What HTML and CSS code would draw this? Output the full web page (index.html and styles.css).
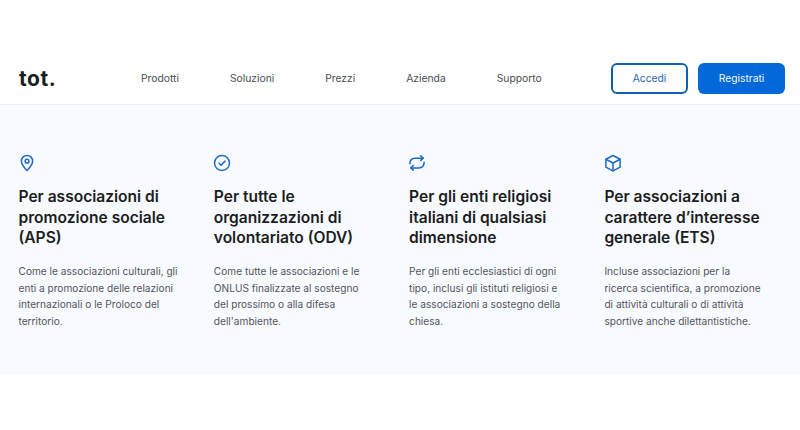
FILE: index.html
```html
<!DOCTYPE html>
<html lang="it">
<head>
<meta charset="utf-8">
<title>tot.</title>
<link rel="stylesheet" href="styles.css">
</head>
<body>
<header class="header">
  <div class="logo">tot.</div>
  <nav class="nav">
    <a>Prodotti</a>
    <a>Soluzioni</a>
    <a>Prezzi</a>
    <a>Azienda</a>
    <a>Supporto</a>
  </nav>
  <div class="actions">
    <a class="btn btn-outline">Accedi</a>
    <a class="btn btn-solid">Registrati</a>
  </div>
</header>
<section class="features">
  <article class="card">
    <svg class="icon" viewBox="0 0 24 24"><path d="M12 22c-1-1.200-7.500-7.600-7.500-12.500a7.500 7.500 0 0 1 15 0c0 4.900-6.500 11.300-7.500 12.500z"/><circle cx="12" cy="9.500" r="2.500"/></svg>
    <h2>Per associazioni di promozione sociale (APS)</h2>
    <p>Come le associazioni culturali, gli enti a promozione delle relazioni internazionali o le Proloco del territorio.</p>
  </article>
  <article class="card">
    <svg class="icon" viewBox="0 0 24 24"><circle cx="12" cy="12" r="10"/><path d="M8 12.300l2.800 2.700L16 9.500"/></svg>
    <h2>Per tutte le organizzazioni di volontariato (ODV)</h2>
    <p>Come tutte le associazioni e le ONLUS finalizzate al sostegno del prossimo o alla difesa dell'ambiente.</p>
  </article>
  <article class="card">
    <svg class="icon" viewBox="0 0 24 24"><path d="M2.500 13c0-4.500 2.500-7.500 7-7.500H20"/><path d="M17 2.500l3.200 3-3.200 3"/><path d="M21.500 11c0 4.500-2.500 7.500-7 7.500H4"/><path d="M7 15.500l-3.200 3 3.200 3"/></svg>
    <h2>Per gli enti religiosi italiani di qualsiasi dimensione</h2>
    <p>Per gli enti ecclesiastici di ogni tipo, inclusi gli istituti religiosi e<br>le associazioni a sostegno della chiesa.</p>
  </article>
  <article class="card">
    <svg class="icon" viewBox="0 0 24 24"><path d="M12 2l9.500 5v10.500L12 22.500l-9.500-5V7z"/><path d="M2.500 7l9.500 5 9.500-5"/><path d="M12 12v10.500"/></svg>
    <h2>Per associazioni a carattere d’interesse generale (ETS)</h2>
    <p>Incluse associazioni per la ricerca scientifica, a promozione di attività culturali o di attività sportive anche dilettantistiche.</p>
  </article>
</section>
</body>
</html>
```

FILE: styles.css
```css
* { box-sizing: border-box; }
html, body { margin: 0; padding: 0; }
body {
  width: 800px;
  height: 430px;
  background: #fff;
  font-family: Inter, "Liberation Sans", sans-serif;
  overflow: hidden;
}
.header {
  display: flex;
  align-items: center;
  height: 105px;
  padding: 62px 15px 10px 19px;
  border-bottom: 1px solid #eceff3;
}
.logo {
  width: 122px;
  font-size: 21px;
  font-weight: 700;
  letter-spacing: 0.6px;
  color: #1c1d20;
}
.nav {
  display: flex;
  gap: 51px;
  flex: 1;
  font-size: 10.300px;
  color: #4a4c52;
}
.actions { display: flex; gap: 10px; }
.btn {
  display: flex;
  align-items: center;
  justify-content: center;
  height: 31px;
  border-radius: 6px;
  font-size: 10.300px;
}
.btn-outline {
  width: 77px;
  border: 2px solid #1160b0;
  color: #2a64ad;
  background: #fff;
}
.btn-solid {
  width: 87px;
  background: #0368d8;
  color: #f2f7fd;
}
.features {
  display: grid;
  grid-template-columns: repeat(4, 195.300px);
  height: 270px;
  padding: 49px 0 0 18.500px;
  background: #f7faff;
}
.card { padding-right: 30px; }
.icon {
  display: block;
  width: 18px;
  height: 18px;
  margin-left: -0.700px;
  fill: none;
  stroke: #1f6bc4;
  stroke-width: 2;
  stroke-linecap: round;
  stroke-linejoin: round;
}
h2 {
  margin: 15px 0 0;
  font-size: 15.550px;
  line-height: 20.500px;
  font-weight: 600;
  color: #1c1d20;
}
p {
  margin: 14.300px 0 0;
  max-width: 161px;
  font-size: 10.150px;
  line-height: 16.700px;
  color: #54565c;
}
```
